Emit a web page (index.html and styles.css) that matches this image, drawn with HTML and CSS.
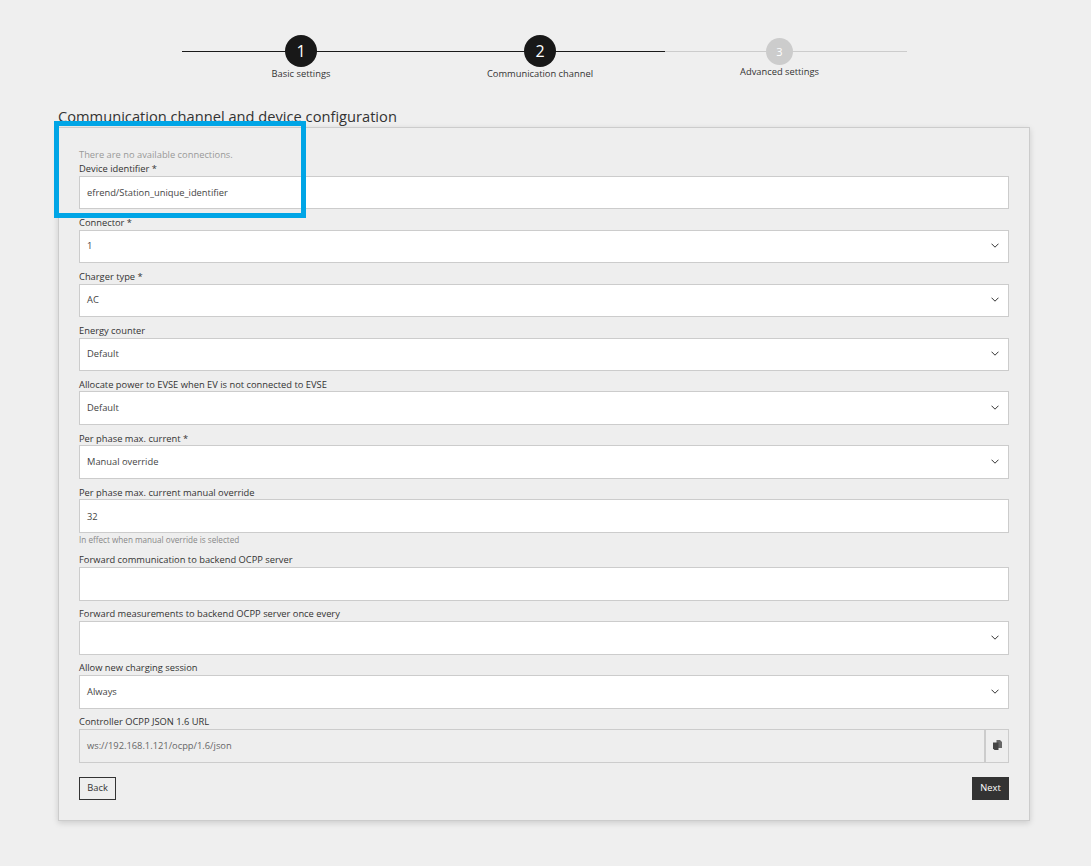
FILE: index.html
```html
<!DOCTYPE html>
<html lang="en">
<head>
<meta charset="utf-8">
<title>Communication channel and device configuration</title>
<link rel="stylesheet" href="styles.css">
</head>
<body>
<svg class="defs" width="0" height="0" aria-hidden="true">
  <symbol id="chev" viewBox="0 0 8 5"><path d="M.5.7 4 4.2 7.5.7" fill="none" stroke="#333" stroke-width="1"/></symbol>
</svg>
<nav class="stepper">
  <span class="line line-done"></span>
  <span class="line line-todo"></span>
  <div class="step step-one"><span class="dot">1</span><span class="step-label">Basic settings</span></div>
  <div class="step step-two"><span class="dot">2</span><span class="step-label">Communication channel</span></div>
  <div class="step step-three"><span class="dot dot-todo">3</span><span class="step-label">Advanced settings</span></div>
</nav>
<main class="page">
  <h1 class="title">Communication channel and device configuration</h1>
  <section class="card">
    <p class="empty">There are no available connections.</p>
    <div class="field"><label class="label">Device identifier *</label><div class="control">efrend/Station_unique_identifier</div></div>
    <div class="field"><label class="label">Connector *</label><div class="control select"><span>1</span><svg class="chev"><use href="#chev"/></svg></div></div>
    <div class="field"><label class="label">Charger type *</label><div class="control select"><span>AC</span><svg class="chev"><use href="#chev"/></svg></div></div>
    <div class="field"><label class="label">Energy counter</label><div class="control select"><span>Default</span><svg class="chev"><use href="#chev"/></svg></div></div>
    <div class="field"><label class="label">Allocate power to EVSE when EV is not connected to EVSE</label><div class="control select"><span>Default</span><svg class="chev"><use href="#chev"/></svg></div></div>
    <div class="field"><label class="label">Per phase max. current *</label><div class="control select"><span>Manual override</span><svg class="chev"><use href="#chev"/></svg></div></div>
    <div class="field field-hint"><label class="label">Per phase max. current manual override</label><div class="control">32</div><p class="hint">In effect when manual override is selected</p></div>
    <div class="field"><label class="label">Forward communication to backend OCPP server</label><div class="control"></div></div>
    <div class="field"><label class="label">Forward measurements to backend OCPP server once every</label><div class="control select"><span></span><svg class="chev"><use href="#chev"/></svg></div></div>
    <div class="field"><label class="label">Allow new charging session</label><div class="control select"><span>Always</span><svg class="chev"><use href="#chev"/></svg></div></div>
    <div class="field"><label class="label">Controller OCPP JSON 1.6 URL</label>
      <div class="group">
        <div class="control readonly">ws://192.168.1.121/ocpp/1.6/json</div>
        <div class="copy"><svg width="9" height="11" viewBox="0 0 9 11"><path d="M3.500 0H7l2 2v6H3.500z" fill="#666"/><path d="M0 2.500h5.500V10H1.500L0 8.500z" fill="#444"/></svg></div>
      </div>
    </div>
    <div class="actions"><button class="btn btn-back">Back</button><button class="btn btn-next">Next</button></div>
  </section>
</main>
<div class="highlight"></div>
</body>
</html>
```
FILE: styles.css
```css
* { box-sizing: border-box; }
html, body { margin: 0; padding: 0; }
body {
  height: 866px;
  background: #efefef;
  font-family: "Open Sans", sans-serif;
  color: #333;
  position: relative;
  overflow: hidden;
}
.defs { position: absolute; }
.stepper {
  position: relative;
  width: 725px;
  height: 107px;
  margin-left: 182px;
  display: grid;
  grid-template-columns: 238px 240px 239px;
  align-items: start;
}
.line { position: absolute; top: 51px; height: 1px; }
.line-done { left: 0; width: 483px; background: #1a1a1a; }
.line-todo { left: 483px; right: 0; background: #ccc; }
.step { position: relative; display: flex; flex-direction: column; align-items: center; padding-top: 35px; }
.dot {
  width: 32px; height: 32px; border-radius: 50%;
  background: #181818; color: #fff;
  display: flex; align-items: center; justify-content: center;
  font-size: 16px; font-weight: 500; line-height: 1;
}
.dot-todo { width: 27px; height: 27px; margin-top: 3px; background: #ccc; font-size: 11px; font-weight: 400; }
.step-label { font-size: 9.33px; line-height: 13px; color: #333; }
.page { width: 972px; margin-left: 58px; }
.title { margin: 0; font-size: 14.67px; font-weight: 400; line-height: 18px; height: 20px; color: #333; }
.card {
  background: #eee;
  border: 1px solid #ccc;
  box-shadow: 0 2px 6px rgba(0,0,0,.15);
  padding: 20px;
  height: 694px;
  display: flex;
  flex-direction: column;
}
.empty { margin: 0 0 1px; font-size: 9.33px; line-height: 13px; color: #999; }
.field { display: flex; flex-direction: column; height: 53.93px; flex: none; }
.field-hint { height: 67.93px; }
.label { font-size: 9.33px; line-height: 13px; height: 13.8px; color: #333; }
.control {
  height: 33.6px;
  background: #fff;
  border: 1px solid #ccc;
  padding: 0 7px;
  display: flex; align-items: center;
  font-size: 9.33px;
  color: #444;
}
.select { justify-content: space-between; padding-right: 9px; padding-bottom: 1.5px; }
.chev { width: 8px; height: 5px; }
.hint { margin: 0; font-size: 8.17px; line-height: 14px; color: #888; }
.group { display: flex; }
.readonly { flex: 1; background: #eee; color: #666; }
.copy {
  width: 25px; height: 33.6px;
  border: 1px solid #ccc; border-left-width: 2px; margin-left: -1px;
  display: flex; align-items: center; justify-content: center;
}
.actions { display: flex; justify-content: space-between; margin-top: 8px; }
.btn { height: 23px; font: 9.33px "Open Sans", sans-serif; padding: 0 0 2px; cursor: pointer; }
.btn-back { width: 37px; background: transparent; border: 1px solid #333; color: #333; }
.btn-next { width: 37px; background: #333; border: 1px solid #333; color: #fff; }
.highlight {
  position: absolute; left: 54px; top: 121px; width: 252px; height: 97px;
  border: 5px solid #00a5e6;
}
```
